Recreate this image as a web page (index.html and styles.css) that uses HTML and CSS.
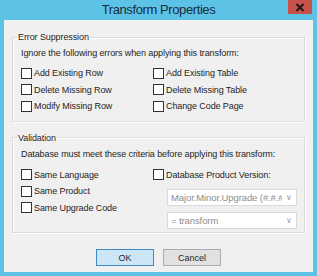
FILE: index.html
```html
<!DOCTYPE html>
<html lang="en">
<head>
  <meta charset="UTF-8">
  <title>Transform Properties</title>
  <link rel="stylesheet" href="styles.css">
</head>
<body>
  <div class="window">
    <div class="titlebar">
      <span></span>
      <span class="title">Transform Properties</span>
      <span class="close">
        <svg width="10" height="9" viewBox="0 0 10 9"><path d="M1.5 1 L8.5 8 M8.5 1 L1.5 8" stroke="#1b1b1b" stroke-width="2"/></svg>
      </span>
    </div>

    <div class="client">
      <fieldset class="group">
        <legend>Error Suppression</legend>
        <p class="desc">Ignore the following errors when applying this transform:</p>
        <div class="options">
          <label class="check"><span class="box"></span>Add Existing Row</label>
          <label class="check"><span class="box"></span>Add Existing Table</label>
          <label class="check"><span class="box"></span>Delete Missing Row</label>
          <label class="check"><span class="box"></span>Delete Missing Table</label>
          <label class="check"><span class="box"></span>Modify Missing Row</label>
          <label class="check"><span class="box"></span>Change Code Page</label>
        </div>
      </fieldset>

      <fieldset class="group group-validation">
        <legend>Validation</legend>
        <p class="desc">Database must meet these criteria before applying this transform:</p>
        <div class="validation">
          <div class="col">
            <label class="check"><span class="box"></span>Same Language</label>
            <label class="check"><span class="box"></span>Same Product</label>
            <label class="check"><span class="box"></span>Same Upgrade Code</label>
          </div>
          <div class="col">
            <label class="check"><span class="box"></span>Database Product Version:</label>
            <div class="combo"><span class="combo-text">Major.Minor.Upgrade (#.#.#)</span><span class="chev">&#8744;</span></div>
            <div class="combo"><span class="combo-text">= transform</span><span class="chev">&#8744;</span></div>
          </div>
        </div>
      </fieldset>

      <div class="buttons">
        <button class="btn btn-default">OK</button>
        <button class="btn">Cancel</button>
      </div>
    </div>
  </div>
</body>
</html>
```

FILE: styles.css
```css
* {
  box-sizing: border-box;
}
body {
  margin: 0;
  font-family: "Liberation Sans", Arial, sans-serif;
  font-size: 9px;
  letter-spacing: -0.1px;
  color: #1e1e1e;
}
.window {
  width: 317px;
  height: 276px;
  background: #5cc3e6;
  padding: 0 4px 4px;
  display: flex;
  flex-direction: column;
}
.titlebar {
  height: 20px;
  display: grid;
  grid-template-columns: 1fr auto 1fr;
  align-items: start;
  margin: 0 -4px;
}
.title {
  font-size: 13px;
  letter-spacing: -0.4px;
  line-height: 19px;
  color: #1a2b3a;
}
.close {
  justify-self: end;
  margin-right: 5px;
  width: 24px;
  height: 14px;
  background: #c9514b;
  display: flex;
  align-items: center;
  justify-content: center;
}
.client {
  flex: 1;
  background: #f0f0f0;
  padding-top: 11px;
}
.group {
  margin: 0 8px;
  padding: 0 0 6px 8px;
  border: 1px solid #dadada;
  box-shadow: inset 1px 1px 0 #fff, 1px 1px 0 #fff;
}
.group legend {
  margin-left: -4px;
  padding: 0 1px;
  line-height: 12px;
}
.group-validation {
  margin-top: 10px;
  padding-bottom: 3px;
}
.desc {
  margin: 4px 0 0;
  line-height: 12px;
}
.options {
  margin-top: 6px;
  display: grid;
  grid-template-columns: 132px 1fr;
  grid-auto-rows: 16.5px;
}
.check {
  display: flex;
  align-items: center;
  height: 16.5px;
  white-space: nowrap;
}
.box {
  width: 11px;
  height: 11px;
  border: 1px solid #333;
  background: #fff;
  margin-right: 2px;
  flex: none;
}
.validation {
  margin-top: 7px;
  display: grid;
  grid-template-columns: 132px 1fr;
}
.combo {
  margin: 6px 0 0 14px;
  width: 130px;
  height: 17px;
  border: 1px solid #d9d9d9;
  background: #fff;
  color: #8d8d8d;
  display: flex;
  align-items: center;
  padding: 0 4px 0 3px;
  overflow: hidden;
}
.combo-text {
  flex: 1;
  overflow: hidden;
  white-space: nowrap;
  font-size: 9.5px;
}
.chev {
  flex: none;
  width: 10px;
  text-align: right;
  font-size: 8px;
  color: #9a9a9a;
}
.buttons {
  margin-top: 16px;
  display: flex;
  justify-content: center;
  gap: 9px;
}
.btn {
  width: 58px;
  height: 17px;
  padding: 0;
  font-family: inherit;
  font-size: 9px;
  color: #1e1e1e;
  background: #e1e1e1;
  border: 1px solid #adadad;
}
.btn-default {
  background: #cde6f7;
  border-color: #3f89c6;
}
```
